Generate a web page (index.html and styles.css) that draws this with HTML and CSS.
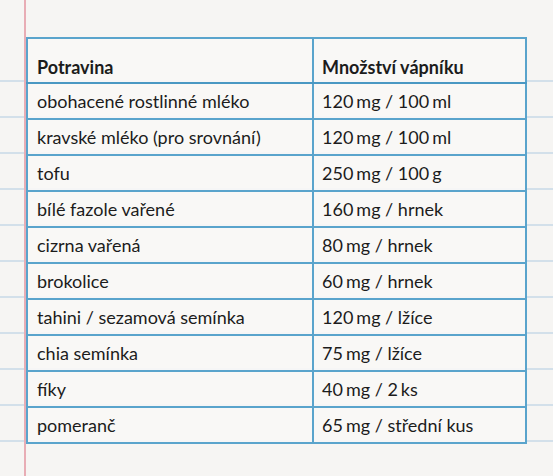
FILE: index.html
```html
<!DOCTYPE html>
<html lang="cs">
<head>
<meta charset="utf-8">
<title>Vápník</title>
<link rel="stylesheet" href="styles.css">
</head>
<body>
<main class="page">
  <table class="calcium">
    <thead>
      <tr><th class="c1">Potravina</th><th class="c2">Množství vápníku</th></tr>
    </thead>
    <tbody>
      <tr><td>obohacené rostlinné mléko</td><td>120<span class="u">mg</span> / 100<span class="u">ml</span></td></tr>
      <tr><td>kravské mléko (pro srovnání)</td><td>120<span class="u">mg</span> / 100<span class="u">ml</span></td></tr>
      <tr><td>tofu</td><td>250<span class="u">mg</span> / 100<span class="u">g</span></td></tr>
      <tr><td>bílé fazole vařené</td><td>160<span class="u">mg</span> / hrnek</td></tr>
      <tr><td>cizrna vařená</td><td>80<span class="u">mg</span> / hrnek</td></tr>
      <tr><td>brokolice</td><td>60<span class="u">mg</span> / hrnek</td></tr>
      <tr><td>tahini / sezamová semínka</td><td>120<span class="u">mg</span> / lžíce</td></tr>
      <tr><td>chia semínka</td><td>75<span class="u">mg</span> / lžíce</td></tr>
      <tr><td>fíky</td><td>40<span class="u">mg</span> / 2<span class="u">ks</span></td></tr>
      <tr><td>pomeranč</td><td>65<span class="u">mg</span> / střední kus</td></tr>
    </tbody>
  </table>
</main>
</body>
</html>
```
FILE: styles.css
```css
html, body {
  margin: 0;
  padding: 0;
}
body {
  width: 553px;
  height: 476px;
  overflow: hidden;
  background-color: #f6f5f3;
  background-image:
    linear-gradient(to right, transparent 0 24px, #e8adb5 24px 26px, transparent 26px),
    linear-gradient(to bottom, #f6f5f3 0 78px, transparent 78px),
    repeating-linear-gradient(to bottom, transparent 0 34px, #d3e0ea 34px 36px);
  background-position: 0 0, 0 0, 0 10px;
  font-family: Lato, "Noto Sans", sans-serif;
  color: #1c1c1c;
}
.page {
  padding: 37px 0 0 26px;
}
.calcium {
  border-collapse: collapse;
  width: 501px;
  border: 2px solid #4a98c3;
  background: rgba(248, 247, 246, 0.92);
  font-size: 18px;
}
.calcium th, .calcium td {
  border: 2px solid #5aa4cc;
  text-align: left;
  padding: 0 8px 0 9px;
  box-sizing: border-box;
}
.calcium th {
  height: 45px;
  font-weight: 700;
  vertical-align: bottom;
  padding-bottom: 4px;
  border-bottom: 2px solid #4a98c3;
}
.calcium td {
  height: 36px;
  padding-top: 0;
  padding-bottom: 1px;
  vertical-align: middle;
}
.calcium .c1 { width: 286px; }
.calcium .c2 { padding-left: 8px; }
.calcium td + td { padding-left: 8px; }
.u { margin-left: 3px; }
```
